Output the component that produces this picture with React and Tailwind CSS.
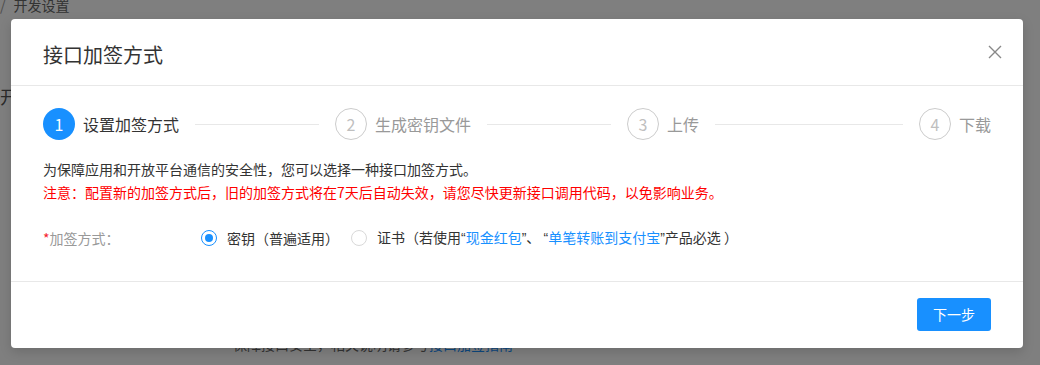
import React from "react";

const steps = [
  { n: 1, title: "设置加签方式" },
  { n: 2, title: "生成密钥文件" },
  { n: 3, title: "上传" },
  { n: 4, title: "下载" },
];

function Steps({ current }) {
  return (
    <div className="flex items-center">
      {steps.map((s, i) => {
        const active = i === current;
        const last = i === steps.length - 1;
        return (
          <div key={s.n} className={`flex items-center ${last ? "flex-none" : "flex-1"}`}>
            <span
              className={`w-8 h-8 rounded-full flex items-center justify-center text-[16px] shrink-0 ${
                active ? "bg-[#1890ff] text-white" : "border border-[#cccccc] text-[#bfbfbf]"
              }`}
            >
              {s.n}
            </span>
            <span className={`ml-2 text-[16px] whitespace-nowrap ${active ? "text-[#333]" : "text-[#999]"}`}>
              {s.title}
            </span>
            {!last && <div className="flex-1 h-px bg-[#e8e8e8] ml-4 mr-4" />}
          </div>
        );
      })}
    </div>
  );
}

function Radio({ checked, children }) {
  return (
    <label className="flex items-center mr-3">
      <span
        className={`w-4 h-4 rounded-full border flex items-center justify-center ${
          checked ? "border-[#1890ff]" : "border-[#d9d9d9]"
        }`}
      >
        {checked && <span className="w-2 h-2 rounded-full bg-[#1890ff]" />}
      </span>
      <span className="ml-[10px] text-[14px] text-[#333] whitespace-nowrap">{children}</span>
    </label>
  );
}

// narrow latin quotes, as in the original page
const Q = ({ children }) => <span className="font-['Liberation_Sans']">{children}</span>;

export default function App() {
  return (
    <div
      className="relative w-[1040px] h-[365px] overflow-hidden bg-white"
      style={{ fontFamily: '"Noto Sans CJK SC", "Noto Sans", sans-serif' }}
    >
      {/* page behind the overlay */}
      <div className="h-[25px] -mt-[5px] text-[14px] text-[#666] flex items-start">
        <span className="mr-2 text-[#999]">/</span>
        <span>开发设置</span>
      </div>
      <div className="pt-[63px] text-[18px] text-[#555]">开发者信息</div>
      <div className="mt-[224px] ml-[233px] text-[14px] text-[#666]">
        保障接口安全，相关说明请参考<span className="text-[#1890ff]">接口加签指南</span>
      </div>

      {/* overlay */}
      <div className="absolute inset-0 bg-black/50" />

      {/* modal */}
      <div className="absolute left-[11px] top-[19px] w-[1012px] bg-white rounded-[4px] shadow-[0_4px_12px_rgba(0,0,0,0.15)]">
        <div className="h-[67px] border-b border-[#e8e8e8] flex items-center justify-between pl-8 pr-[21px]">
          <h2 className="text-[20px] text-[#333] pt-[6px]">接口加签方式</h2>
          <svg width="14" height="14" viewBox="0 0 14 14" className="text-[#888]">
            <path d="M1 1L13 13M13 1L1 13" stroke="currentColor" strokeWidth="1.4" />
          </svg>
        </div>

        <div className="h-[195px] px-8 pt-[22px]">
          <Steps current={0} />
          <div className="mt-[18px] text-[14px] leading-[23px]">
            <p className="text-[#333]">为保障应用和开放平台通信的安全性，您可以选择一种接口加签方式。</p>
            <p className="text-[#ff0000]">注意：配置新的加签方式后，旧的加签方式将在7天后自动失效，请您尽快更新接口调用代码，以免影响业务。</p>
          </div>
          <div className="mt-[18px] h-8 flex items-center">
            <div className="w-[158px] text-[14px] text-[#999]">
              <span className="text-[#f5222d]">*</span>加签方式：
            </div>
            <Radio checked>密钥（普遍适用）</Radio>
            <Radio>
              证书（若使用<Q>“</Q>
              <span className="text-[#1890ff]">现金红包</span>
              <Q>”</Q>、 <Q>“</Q>
              <span className="text-[#1890ff]">单笔转账到支付宝</span>
              <Q>”</Q>产品必选 ）
            </Radio>
          </div>
        </div>

        <div className="h-[67px] border-t border-[#e8e8e8] flex items-start justify-end pt-[16px] pr-8">
          <button className="w-[74px] h-[33px] rounded-[3px] bg-[#1890ff] text-white text-[14px]">下一步</button>
        </div>
      </div>
    </div>
  );
}
